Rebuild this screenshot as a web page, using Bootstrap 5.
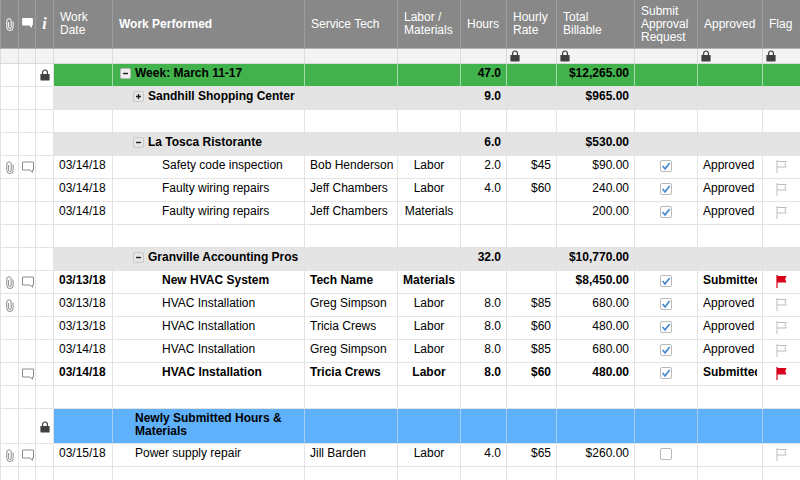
<!DOCTYPE html>
<html lang="en">
<head>
<meta charset="utf-8">
<meta name="viewport" content="width=device-width, initial-scale=1">
<title>Service hours</title>
<link rel="stylesheet" href="https://cdn.jsdelivr.net/npm/bootstrap@5.3.0/dist/css/bootstrap.min.css">
<style>
body{font-family:"Liberation Sans",Arial,sans-serif;font-size:12px;line-height:13px;color:#000}
.sheet{width:100%;table-layout:fixed;border-collapse:separate;border-spacing:0}
.sheet td,.sheet th{border-left:1px solid #e3e3e3;border-bottom:1px solid #e3e3e3}
.sheet td{height:23px;padding:3px 5px 0;vertical-align:top;background:#fff}
.sheet td:nth-child(-n+3){padding:5px 0 0 1px;text-align:center}
.sheet td:nth-child(6){white-space:nowrap}
.sheet td:nth-child(7),.sheet td:nth-child(11),.sheet td:nth-child(13){text-align:center}
.sheet td:nth-child(8),.sheet td:nth-child(9),.sheet td:nth-child(10){text-align:right}
.sheet td:nth-child(11),.sheet td:nth-child(13){padding-top:4px}
.sheet thead th{height:49px;padding:0 5px 0 6px;vertical-align:middle;font-weight:400;color:#fff;background:#888;border-color:#9d9d9d;border-bottom-color:#b4b4b4}
.sheet thead th.fw-bold{font-weight:700}
.sheet thead th.mark-col{padding:0;text-align:center}
.sheet .locks td{height:15px;padding:1px 3px 0;background:#f3f3f3;border-color:#dadada;text-align:left}
.sheet .week td:nth-child(n+4){background:#42b24c;border-left-color:#a5d9a8;border-bottom-color:#e4e4e4}
.sheet .group td:nth-child(n+4){background:#e4e4e4;border-color:#e4e4e4}
.sheet .group td:nth-child(n+5){border-left-color:#e1e1e1}
.sheet .inbox td{height:35px}
.sheet .inbox td:nth-child(n+4){background:#5fb1fc;border-left-color:#a8cdf0}
.sheet .inbox td:nth-child(3){padding-top:12px}
.sheet .week td:nth-child(4),.sheet .inbox td:nth-child(4){border-left-color:#e3e3e3}
.sheet svg{display:inline-block;vertical-align:top}
.lv1{padding-left:2px}.lv2{padding-left:15px}.lv3{padding-left:44px}.lv0{padding-left:17px}
.twist{gap:4px}
.fold{width:11px;height:11px;margin-top:1px;padding:0;border:1px solid #bbb;border-radius:2px;background:#eee;line-height:0}
.group .fold{border-color:#c8c8c8;background:#e6e6e6}
.fold svg{width:9px;height:9px}
.sheet .tick{width:12px;height:12px;margin:0;border:1px solid #b9b9b9;border-radius:2px;background-color:#fff;vertical-align:top}
.sheet .tick:checked{background-color:#fff;border-color:#b9b9b9;background-size:10px 10px;background-image:url("data:image/svg+xml,%3Csvg xmlns='http://www.w3.org/2000/svg' viewBox='0 0 10 10'%3E%3Cpath d='M1.6 5 4 7.8 8.7 2' fill='none' stroke='%23488bd0' stroke-width='1.7'/%3E%3C/svg%3E")}
.clip,.talk{color:#8c8c8c}
.sheet thead .info{font:italic bold 16px/16px "Liberation Serif",serif}
.lock{color:#404040}
.flag{color:#bdbdbd}
.flag-on{color:#d9001b}
</style>
<script src="https://cdn.jsdelivr.net/npm/bootstrap@5.3.0/dist/js/bootstrap.bundle.min.js"></script>
</head>
<body>
<svg class="d-none" aria-hidden="true">
<symbol id="clip" viewBox="0 0 8 13"><path d="M2.6 4v5.2a1.3 1.3 0 0 0 2.6 0V3a2.1 2.1 0 0 0-4.4 0v6.4a3.1 3.1 0 0 0 6.3 0V3.6" fill="none" stroke="currentColor" stroke-width="1"/></symbol>
<symbol id="talk" viewBox="0 0 12 12"><path d="M.5 1h11v8h-1v2.2L8 9H.5z" fill="none" stroke="currentColor"/></symbol>
<symbol id="lock" viewBox="0 0 10 12"><path d="M2.6 6V3.4a2.4 2.4 0 0 1 4.8 0V6" fill="none" stroke="currentColor" stroke-width="1.2"/><rect x=".4" y="5" width="9.2" height="6.4" rx=".6" fill="currentColor"/></symbol>
<symbol id="flag" viewBox="0 0 11 13"><path d="M1 0v13M1 1.5h9.3L8.8 4.2l1.5 2.8H1" fill="none" stroke="currentColor"/></symbol>
<symbol id="flagon" viewBox="0 0 11 13"><path d="M.4 0h1.2v.9h8.9L9.2 4.2l1.3 3.3H1.6V13H.4z" fill="currentColor"/></symbol>
<symbol id="minus" viewBox="0 0 9 9"><path d="M2 4.5h5" stroke="#222" stroke-width="1.4"/></symbol>
<symbol id="plus" viewBox="0 0 9 9"><path d="M2 4.5h5M4.5 2v5" stroke="#222" stroke-width="1.4"/></symbol>
</svg>
<main class="vh-100 overflow-hidden">
<table class="sheet">
<colgroup><col width="18"><col width="17"><col width="18"><col width="59"><col><col width="93"><col width="63"><col width="46"><col width="50"><col width="78"><col width="63"><col width="65"><col width="38"></colgroup>
<thead>
<tr>
<th class="mark-col" aria-label="Attachments"><svg width="8" height="13"><use href="#clip"/></svg></th>
<th class="mark-col" aria-label="Comments"><svg width="11" height="10" viewBox="0 0 11 10"><path d="M1 0h9q.9 0 .9.8v6q0 .8-.9.8v2.400L7.300 7.600H1q-.9 0-.9-.8v-6Q.1 0 1 0z" fill="#fff"/></svg></th>
<th class="mark-col info">i</th>
<th>Work Date</th><th class="fw-bold">Work Performed</th><th>Service Tech</th><th>Labor / Materials</th><th>Hours</th><th>Hourly Rate</th><th>Total Billable</th><th>Submit Approval Request</th><th>Approved</th><th>Flag</th>
</tr>
</thead>
<tbody>
<tr class="locks"><td></td><td></td><td></td><td></td><td></td><td></td><td></td><td></td><td><svg class="lock" width="10" height="12"><use href="#lock"/></svg></td><td><svg class="lock" width="10" height="12"><use href="#lock"/></svg></td><td></td><td><svg class="lock" width="10" height="12"><use href="#lock"/></svg></td><td><svg class="lock" width="10" height="12"><use href="#lock"/></svg></td></tr>
<tr class="week fw-bold"><td></td><td></td><td><svg class="lock" width="10" height="12"><use href="#lock"/></svg></td><td></td><td><div class="d-flex twist lv1"><button class="fold" type="button" aria-label="Collapse"><svg><use href="#minus"/></svg></button><span>Week: March 11-17</span></div></td><td></td><td></td><td>47.0</td><td></td><td>$12,265.00</td><td></td><td></td><td></td></tr>
<tr class="group fw-bold"><td></td><td></td><td></td><td></td><td><div class="d-flex twist lv2"><button class="fold" type="button" aria-label="Expand"><svg><use href="#plus"/></svg></button><span>Sandhill Shopping Center</span></div></td><td></td><td></td><td>9.0</td><td></td><td>$965.00</td><td></td><td></td><td></td></tr>
<tr><td></td><td></td><td></td><td></td><td></td><td></td><td></td><td></td><td></td><td></td><td></td><td></td><td></td></tr>
<tr class="group fw-bold"><td></td><td></td><td></td><td></td><td><div class="d-flex twist lv2"><button class="fold" type="button" aria-label="Collapse"><svg><use href="#minus"/></svg></button><span>La Tosca Ristorante</span></div></td><td></td><td></td><td>6.0</td><td></td><td>$530.00</td><td></td><td></td><td></td></tr>
<tr><td><svg class="clip" width="8" height="13"><use href="#clip"/></svg></td><td><svg class="talk" width="12" height="12"><use href="#talk"/></svg></td><td></td><td>03/14/18</td><td><div class="lv3">Safety code inspection</div></td><td>Bob Henderson</td><td>Labor</td><td>2.0</td><td>$45</td><td>$90.00</td><td><input class="form-check-input tick" type="checkbox" checked aria-label="Submit approval request"></td><td><div class="overflow-hidden">Approved</div></td><td><svg class="flag" width="11" height="13"><use href="#flag"/></svg></td></tr>
<tr><td></td><td></td><td></td><td>03/14/18</td><td><div class="lv3">Faulty wiring repairs</div></td><td>Jeff Chambers</td><td>Labor</td><td>4.0</td><td>$60</td><td>240.00</td><td><input class="form-check-input tick" type="checkbox" checked aria-label="Submit approval request"></td><td><div class="overflow-hidden">Approved</div></td><td><svg class="flag" width="11" height="13"><use href="#flag"/></svg></td></tr>
<tr><td></td><td></td><td></td><td>03/14/18</td><td><div class="lv3">Faulty wiring repairs</div></td><td>Jeff Chambers</td><td>Materials</td><td></td><td></td><td>200.00</td><td><input class="form-check-input tick" type="checkbox" checked aria-label="Submit approval request"></td><td><div class="overflow-hidden">Approved</div></td><td><svg class="flag" width="11" height="13"><use href="#flag"/></svg></td></tr>
<tr><td></td><td></td><td></td><td></td><td></td><td></td><td></td><td></td><td></td><td></td><td></td><td></td><td></td></tr>
<tr class="group fw-bold"><td></td><td></td><td></td><td></td><td><div class="d-flex twist lv2"><button class="fold" type="button" aria-label="Collapse"><svg><use href="#minus"/></svg></button><span>Granville Accounting Pros</span></div></td><td></td><td></td><td>32.0</td><td></td><td>$10,770.00</td><td></td><td></td><td></td></tr>
<tr class="fw-bold"><td><svg class="clip" width="8" height="13"><use href="#clip"/></svg></td><td><svg class="talk" width="12" height="12"><use href="#talk"/></svg></td><td></td><td>03/13/18</td><td><div class="lv3">New HVAC System</div></td><td>Tech Name</td><td>Materials</td><td></td><td></td><td>$8,450.00</td><td><input class="form-check-input tick" type="checkbox" checked aria-label="Submit approval request"></td><td><div class="overflow-hidden">Submitted</div></td><td><svg class="flag-on" width="11" height="13"><use href="#flagon"/></svg></td></tr>
<tr><td><svg class="clip" width="8" height="13"><use href="#clip"/></svg></td><td></td><td></td><td>03/13/18</td><td><div class="lv3">HVAC Installation</div></td><td>Greg Simpson</td><td>Labor</td><td>8.0</td><td>$85</td><td>680.00</td><td><input class="form-check-input tick" type="checkbox" checked aria-label="Submit approval request"></td><td><div class="overflow-hidden">Approved</div></td><td><svg class="flag" width="11" height="13"><use href="#flag"/></svg></td></tr>
<tr><td></td><td></td><td></td><td>03/13/18</td><td><div class="lv3">HVAC Installation</div></td><td>Tricia Crews</td><td>Labor</td><td>8.0</td><td>$60</td><td>480.00</td><td><input class="form-check-input tick" type="checkbox" checked aria-label="Submit approval request"></td><td><div class="overflow-hidden">Approved</div></td><td><svg class="flag" width="11" height="13"><use href="#flag"/></svg></td></tr>
<tr><td></td><td></td><td></td><td>03/14/18</td><td><div class="lv3">HVAC Installation</div></td><td>Greg Simpson</td><td>Labor</td><td>8.0</td><td>$85</td><td>680.00</td><td><input class="form-check-input tick" type="checkbox" checked aria-label="Submit approval request"></td><td><div class="overflow-hidden">Approved</div></td><td><svg class="flag" width="11" height="13"><use href="#flag"/></svg></td></tr>
<tr class="fw-bold"><td></td><td><svg class="talk" width="12" height="12"><use href="#talk"/></svg></td><td></td><td>03/14/18</td><td><div class="lv3">HVAC Installation</div></td><td>Tricia Crews</td><td>Labor</td><td>8.0</td><td>$60</td><td>480.00</td><td><input class="form-check-input tick" type="checkbox" checked aria-label="Submit approval request"></td><td><div class="overflow-hidden">Submitted</div></td><td><svg class="flag-on" width="11" height="13"><use href="#flagon"/></svg></td></tr>
<tr><td></td><td></td><td></td><td></td><td></td><td></td><td></td><td></td><td></td><td></td><td></td><td></td><td></td></tr>
<tr class="inbox fw-bold"><td></td><td></td><td><svg class="lock" width="10" height="12"><use href="#lock"/></svg></td><td></td><td><div class="lv0">Newly Submitted Hours &amp; Materials</div></td><td></td><td></td><td></td><td></td><td></td><td></td><td></td><td></td></tr>
<tr><td><svg class="clip" width="8" height="13"><use href="#clip"/></svg></td><td><svg class="talk" width="12" height="12"><use href="#talk"/></svg></td><td></td><td>03/15/18</td><td><div class="lv0">Power supply repair</div></td><td>Jill Barden</td><td>Labor</td><td>4.0</td><td>$65</td><td>$260.00</td><td><input class="form-check-input tick" type="checkbox" aria-label="Submit approval request"></td><td></td><td><svg class="flag" width="11" height="13"><use href="#flag"/></svg></td></tr>
<tr><td></td><td></td><td></td><td></td><td></td><td></td><td></td><td></td><td></td><td></td><td></td><td></td><td></td></tr>
</tbody>
</table>
</main>
</body>
</html>
